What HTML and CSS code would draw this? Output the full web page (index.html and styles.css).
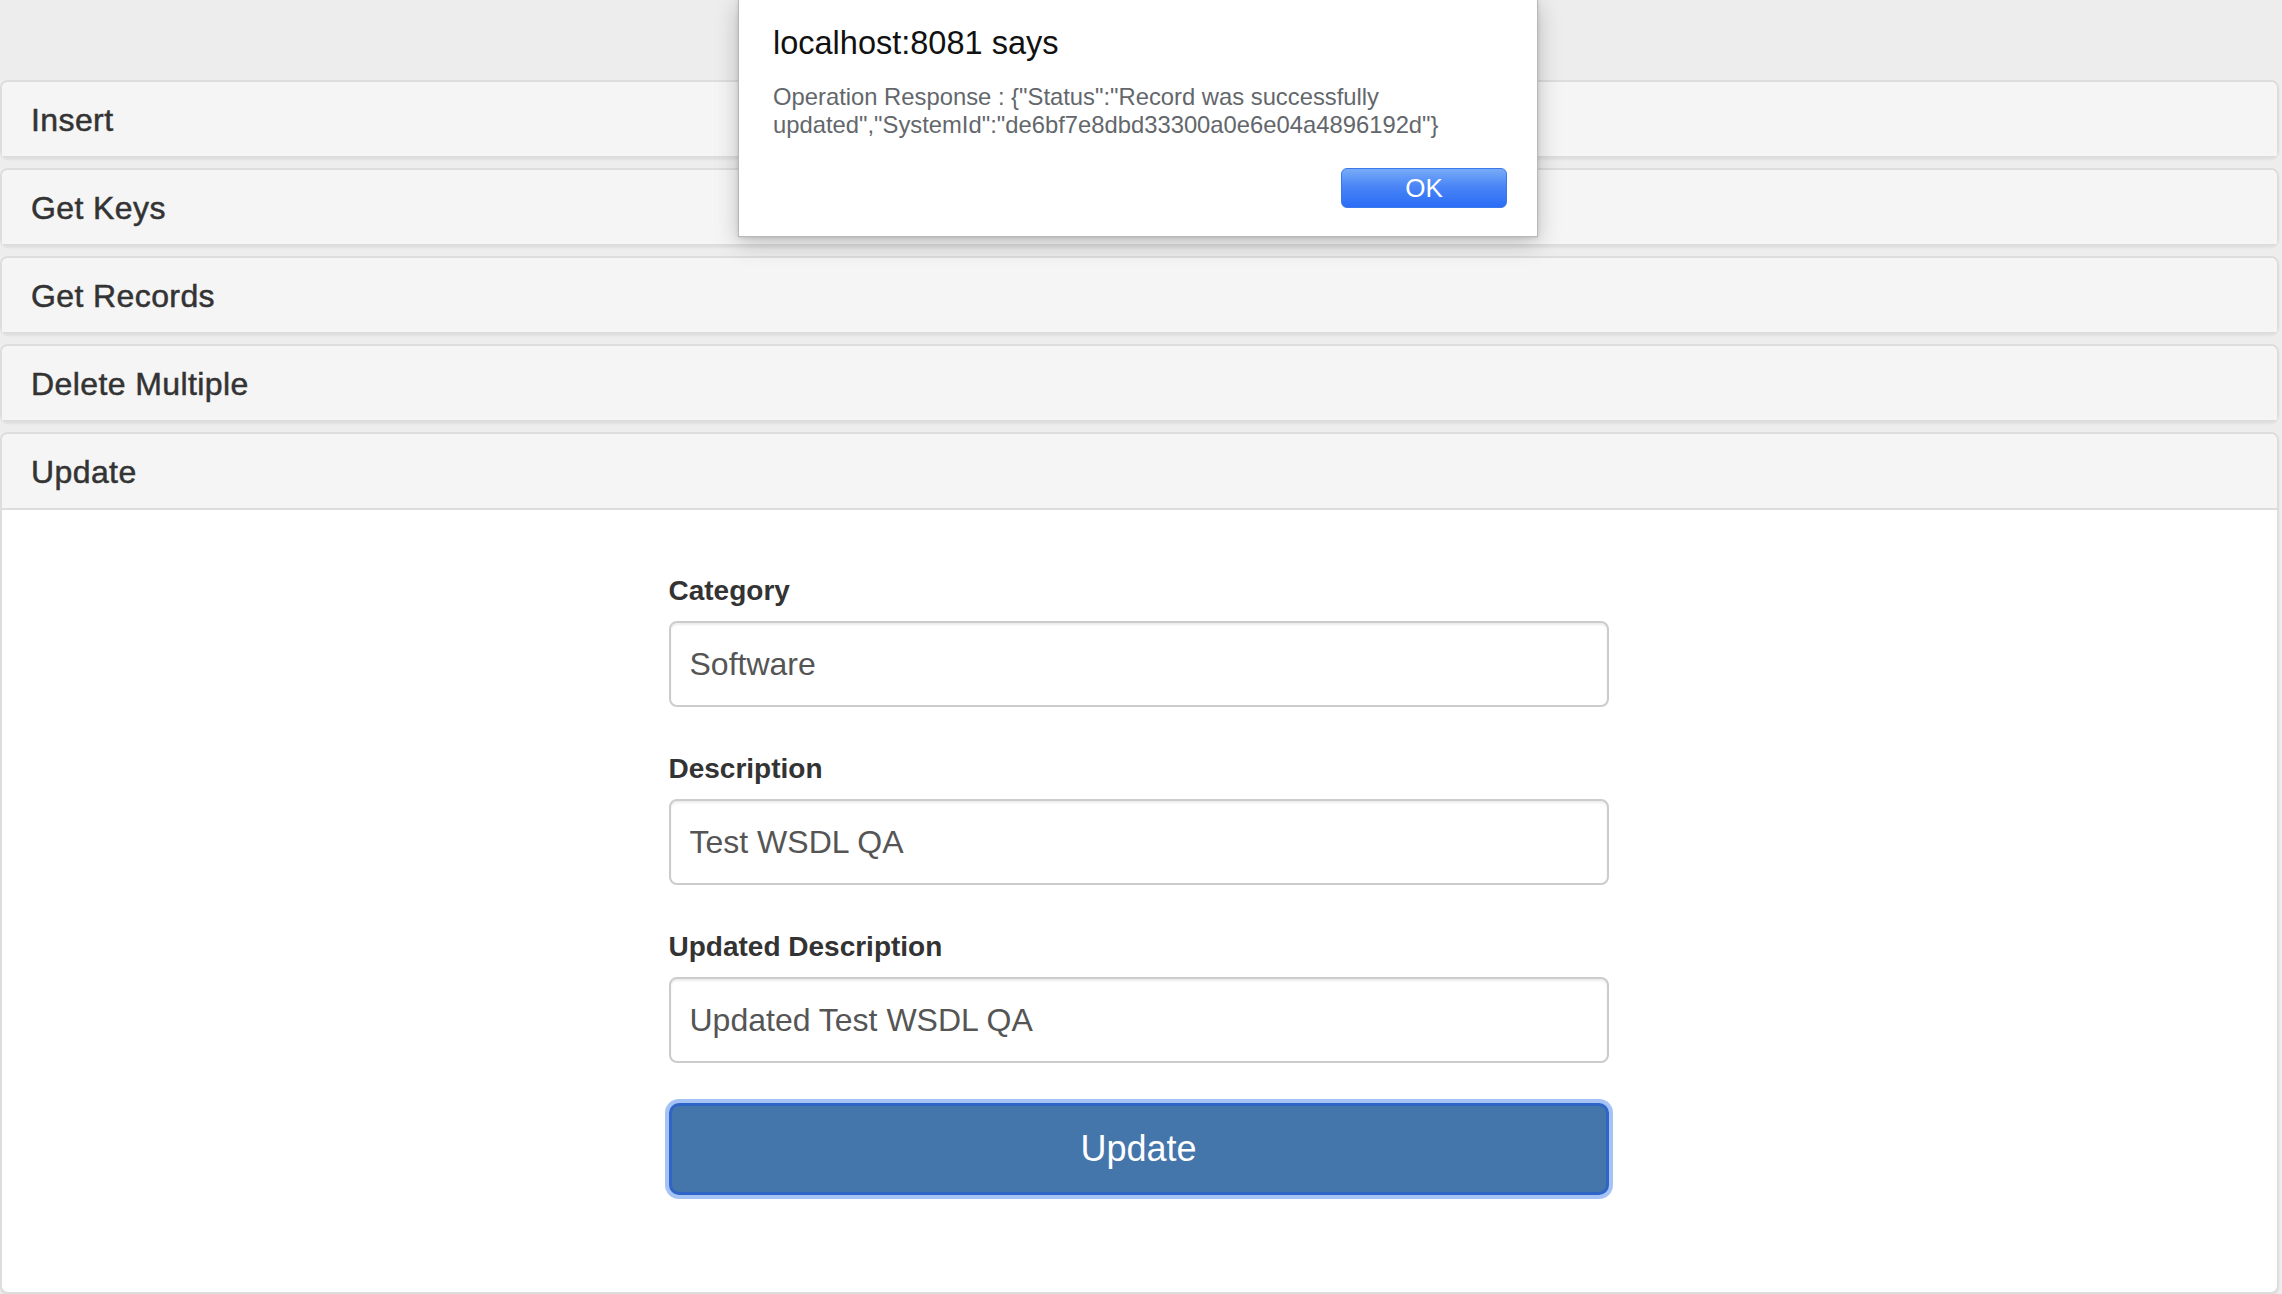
FILE: index.html
```html
<!DOCTYPE html>
<html lang="en">
<head>
<meta charset="utf-8">
<title>Operations</title>
<link rel="stylesheet" href="styles.css">
</head>
<body>
<div class="page">
  <div class="panel-group">
    <div class="panel"><div class="panel-heading"><h4 class="panel-title">Insert</h4></div></div>
    <div class="panel"><div class="panel-heading"><h4 class="panel-title">Get Keys</h4></div></div>
    <div class="panel"><div class="panel-heading"><h4 class="panel-title">Get Records</h4></div></div>
    <div class="panel"><div class="panel-heading"><h4 class="panel-title">Delete Multiple</h4></div></div>
    <div class="panel panel-open">
      <div class="panel-heading"><h4 class="panel-title">Update</h4></div>
      <div class="panel-body">
        <form class="update-form">
          <div class="form-group">
            <label class="form-label">Category</label>
            <input class="form-control" type="text" value="Software">
          </div>
          <div class="form-group">
            <label class="form-label">Description</label>
            <input class="form-control" type="text" value="Test WSDL QA">
          </div>
          <div class="form-group form-group-last">
            <label class="form-label">Updated Description</label>
            <input class="form-control" type="text" value="Updated Test WSDL QA">
          </div>
          <button class="btn-primary" type="button">Update</button>
        </form>
      </div>
    </div>
  </div>
</div>

<div class="alert-dialog">
  <div class="alert-title">localhost:8081 says</div>
  <div class="alert-message">Operation Response : {"Status":"Record was successfully updated","SystemId":"de6bf7e8dbd33300a0e6e04a4896192d"}</div>
  <div class="alert-actions">
    <button class="alert-ok" type="button">OK</button>
  </div>
</div>
</body>
</html>
```

FILE: styles.css
```css
* {
  box-sizing: border-box;
}

html, body {
  margin: 0;
  padding: 0;
  background: #ededed;
  font-family: "Liberation Sans", Arial, Helvetica, sans-serif;
  color: #333333;
}

body {
  width: 2282px;
  height: 1294px;
  overflow: hidden;
  position: relative;
}

.page {
  padding: 80px 3px 0 0;
}

.panel-group {
  display: flex;
  flex-direction: column;
  gap: 10px;
}

.panel {
  background: #ffffff;
  border: 2px solid #dddddd;
  border-radius: 8px;
  box-shadow: 0 2px 2px rgba(0, 0, 0, 0.05);
}

.panel-heading {
  background: #f5f5f5;
  padding: 21px 30px 19px 29px;
  border-radius: 6px 6px 0 0;
}

.panel-title {
  margin: 0;
  font-size: 32px;
  line-height: 34px;
  font-weight: 400;
  letter-spacing: 0.4px;
  color: #333333;
  -webkit-text-stroke: 0.5px #333333;
}

.panel-body {
  border-top: 2px solid #dddddd;
  padding: 61px 0 97px;
}

.update-form {
  width: 940px;
  margin: 0 auto;
  position: relative;
  left: -1px;
}

.form-group {
  margin-bottom: 42px;
}

.form-group-last {
  margin-bottom: 40px;
}

.form-label {
  display: block;
  font-size: 28px;
  line-height: 40px;
  font-weight: 700;
  color: #333333;
  margin-bottom: 10px;
}

.form-control {
  display: block;
  width: 100%;
  height: 86px;
  padding: 0 20px 0 19px;
  font-family: "Liberation Sans", Arial, Helvetica, sans-serif;
  font-size: 32px;
  color: #555555;
  background: #ffffff;
  border: 2px solid #cccccc;
  border-radius: 8px;
  box-shadow: inset 0 2px 2px rgba(0, 0, 0, 0.075);
  outline: none;
}

.btn-primary {
  display: block;
  width: 100%;
  height: 92px;
  font-family: "Liberation Sans", Arial, Helvetica, sans-serif;
  font-size: 36px;
  color: #ffffff;
  background: #4475ab;
  border: 3px solid #2f65c6;
  border-radius: 10px;
  box-shadow: 0 0 0 4px #a6c3f5;
  cursor: pointer;
}

.alert-dialog {
  position: absolute;
  top: -1px;
  left: 738px;
  width: 800px;
  background: #ffffff;
  border: 1px solid rgba(0, 0, 0, 0.28);
  box-shadow: 0 6px 22px rgba(0, 0, 0, 0.22), 0 1px 4px rgba(0, 0, 0, 0.12);
  padding: 23px 30px 28px 34px;
}

.alert-title {
  font-size: 32.5px;
  line-height: 40px;
  color: #111111;
}

.alert-message {
  margin-top: 20px;
  font-size: 23.8px;
  line-height: 28px;
  color: #63676c;
  padding-right: 20px;
}

.alert-actions {
  display: flex;
  justify-content: flex-end;
  margin-top: 29px;
}

.alert-ok {
  width: 166px;
  height: 40px;
  border: 1px solid #3a78ee;
  border-radius: 6px;
  background: linear-gradient(to bottom, #78abf8 0%, #4a86f6 45%, #2a6cf5 100%);
  color: #ffffff;
  font-family: "Liberation Sans", Arial, Helvetica, sans-serif;
  font-size: 26px;
  line-height: 38px;
  padding: 0;
}
```
